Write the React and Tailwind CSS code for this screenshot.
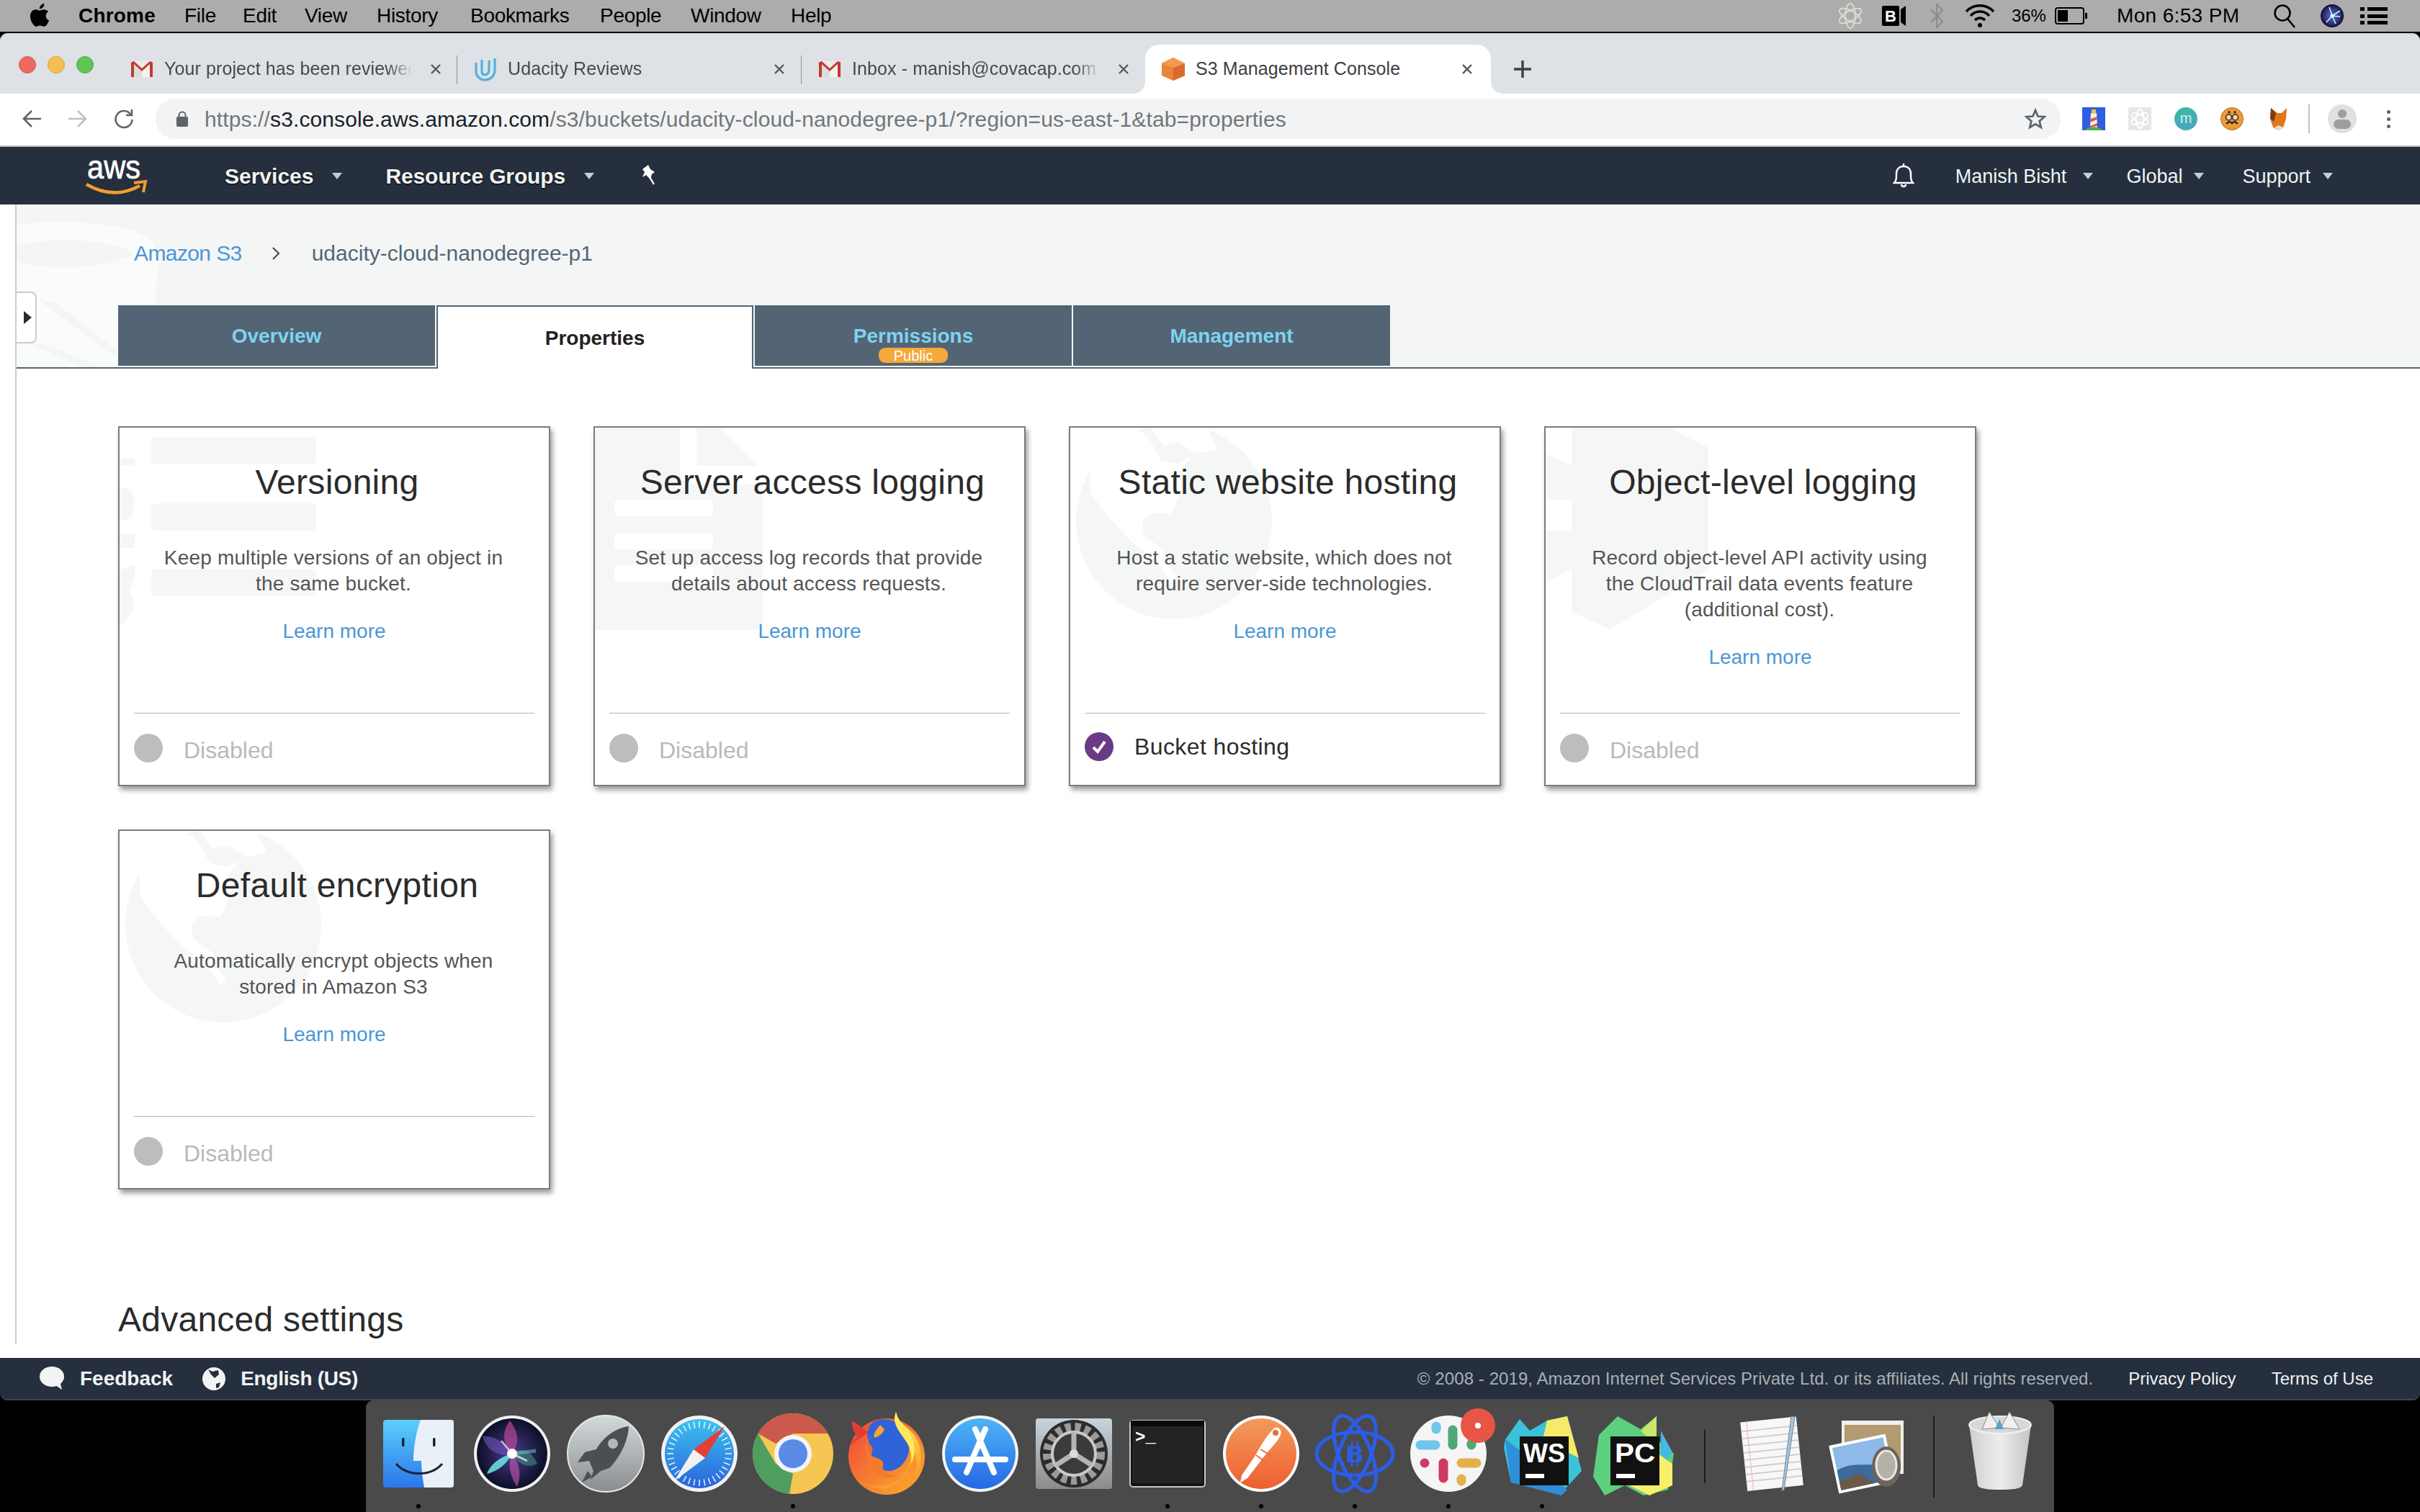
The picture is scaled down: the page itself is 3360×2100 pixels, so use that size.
import React from "react";

const FONT = "[font-family:'Liberation_Sans',Arial,sans-serif]";

function Caret({ className = "" }) {
  return (
    <svg width="14" height="9" viewBox="0 0 14 9" className={className}>
      <path d="M0 0H14L7 9Z" fill="#c9cdd1" />
    </svg>
  );
}

function CloseX() {
  return (
    <svg width="16" height="16" viewBox="0 0 16 16" className="shrink-0">
      <path d="M2 2L14 14M14 2L2 14" stroke="#55595e" strokeWidth="2.4" />
    </svg>
  );
}

function Gmail() {
  return (
    <svg width="30" height="22" viewBox="0 0 30 22" className="shrink-0">
      <path d="M0 0H30V22H0Z" fill="#ececec" />
      <path d="M4 4L15 14V22H4Z" fill="#dcdcdc" />
      <path d="M15 14L26 4V22H15Z" fill="#f2f2f2" />
      <path d="M4 4V22H0V1.5L4 0L15 10L26 0L30 1.5V22H26V4L15 14Z" fill="#c5392c" />
    </svg>
  );
}

function UdacityIcon() {
  return (
    <svg width="32" height="34" viewBox="0 0 32 34" className="shrink-0" fill="none" stroke="#4fb3dc" strokeWidth="3.2">
      <path d="M3 8V21C3 27 9 32 15 32C23 32 29 26 29 18V2" />
      <path d="M11 4V20C11 24 13 25 15 25C20 25 21 21 21 16V5" />
    </svg>
  );
}

function S3Icon() {
  return (
    <svg width="32" height="32" viewBox="0 0 32 32" className="shrink-0">
      <path d="M16 0L32 8V25L16 32L0 25V8Z" fill="#e8843a" />
      <path d="M16 14L32 8V25L16 32Z" fill="#d96a2f" />
      <path d="M16 0L32 8L16 14L0 8Z" fill="#ef9a4e" />
    </svg>
  );
}

function ChromeTab({ icon, label, active, sep, widthClass = "w-[477px]" }) {
  return (
    <div className={`relative flex h-[68px] items-center ${widthClass} shrink-0 ${active ? "bg-white rounded-t-[20px]" : ""}`}>
      {active && <div className="absolute bottom-0 -left-[16px] h-[16px] w-[16px] bg-[radial-gradient(circle_at_0_0,transparent_15.5px,white_16px)]" />}
      {active && <div className="absolute bottom-0 -right-[16px] h-[16px] w-[16px] bg-[radial-gradient(circle_at_100%_0,transparent_15.5px,white_16px)]" />}
      <div className="flex w-[70px] shrink-0 justify-center pl-[8px]">{icon}</div>
      <div className={`w-[352px] overflow-hidden whitespace-nowrap text-[25px] tracking-[0.1px] ${active ? "text-[#3c4043]" : "text-[#45494e] [mask-image:linear-gradient(to_right,black_88%,transparent_98%)]"}`}>
        {label}
      </div>
      <div className="ml-[17px]"><CloseX /></div>
      {sep && <div className="absolute right-0 top-[15px] h-[40px] w-[1.5px] bg-[#8d9094]" />}
    </div>
  );
}

const menuItems = [
  ["File", "w-[81px]"],
  ["Edit", "w-[86px]"],
  ["View", "w-[100px]"],
  ["History", "w-[130px]"],
  ["Bookmarks", "w-[180px]"],
  ["People", "w-[126px]"],
  ["Window", "w-[139px]"],
  ["Help", "w-[70px]"],
];

function MenuBar() {
  return (
    <div className="flex h-[44px] shrink-0 items-center bg-[#acacac] text-[28px] text-black">
      <svg width="28" height="32" viewBox="0 0 814 1000" className="ml-[41px] mb-[2px]">
        <path d="M788 340c-6 4-108 62-108 190 0 148 130 200 134 202-1 3-21 72-69 142-43 61-88 122-156 122s-86-40-165-40c-77 0-104 41-166 41s-106-57-156-127C44 788 0 664 0 547c0-189 123-289 244-289 64 0 118 42 158 42 38 0 98-45 171-45 28 0 128 3 215 85zM554 160c31-37 53-87 53-138 0-7-1-14-2-20-51 2-111 34-147 76-28 32-55 82-55 134 0 8 1 16 2 18 3 1 9 1 14 1 46 0 103-31 135-71z" fill="#000" />
      </svg>
      <div className="ml-[40px] w-[147px] font-bold leading-none tracking-[0.2px]">Chrome</div>
      {menuItems.map(([m, w]) => (
        <div key={m} className={`${w} leading-none tracking-[-0.3px]`}>{m}</div>
      ))}
      <div className="ml-auto flex items-center pr-[45px]">
        <svg width="32" height="44" viewBox="0 0 32 44" fill="none" stroke="#e4e2d8" strokeWidth="1.6">
          <ellipse cx="16" cy="22" rx="7" ry="17" />
          <ellipse cx="16" cy="22" rx="7" ry="17" transform="rotate(60 16 22)" />
          <ellipse cx="16" cy="22" rx="7" ry="17" transform="rotate(-60 16 22)" />
        </svg>
        <svg width="33" height="28" viewBox="0 0 33 28" className="ml-[28px]">
          <rect x="0" y="0" width="24" height="28" rx="2" fill="#000" />
          <path d="M26 5L33 0V28L26 23Z" fill="#000" />
          <text x="4" y="22" fontFamily="Liberation Sans" fontWeight="700" fontSize="22" fill="#fff">B</text>
        </svg>
        <svg width="18" height="36" viewBox="0 0 18 36" className="ml-[34px]" fill="none" stroke="#8c8c8c" strokeWidth="2">
          <path d="M1 9L17 26L9 34V2L17 10L1 27" />
        </svg>
        <svg width="42" height="34" viewBox="0 0 42 34" className="ml-[30px]" fill="none" stroke="#000" strokeWidth="3.4">
          <path d="M2 11C12 0 30 0 40 11" />
          <path d="M8 17C15 9 27 9 34 17" />
          <path d="M14 23C18 19 24 19 28 23" />
          <circle cx="21" cy="30" r="3" fill="#000" stroke="none" />
        </svg>
        <div className="ml-[23px] w-[50px] text-[24px] leading-none tracking-[-0.1px]">36%</div>
        <svg width="46" height="24" viewBox="0 0 46 24" className="ml-[10px]">
          <rect x="1" y="1" width="39" height="22" rx="3" fill="none" stroke="#000" strokeWidth="2" />
          <rect x="4" y="4" width="14" height="16" fill="#000" />
          <rect x="42" y="8" width="3" height="8" fill="#000" />
        </svg>
        <div className="ml-[40px] w-[174px] leading-none tracking-[0.35px] whitespace-nowrap">Mon 6:53 PM</div>
        <svg width="32" height="34" viewBox="0 0 32 34" className="ml-[43px]" fill="none" stroke="#000" strokeWidth="2.6">
          <circle cx="13" cy="13" r="10.5" />
          <path d="M20 21L30 33" />
        </svg>
        <svg width="32" height="44" viewBox="0 0 32 44" className="ml-[34px]">
          <defs>
            <radialGradient id="ms">
              <stop offset="0" stopColor="#3a7fd0" />
              <stop offset="0.7" stopColor="#3a2a78" />
              <stop offset="1" stopColor="#0d0d24" />
            </radialGradient>
          </defs>
          <circle cx="16" cy="22" r="16" fill="url(#ms)" />
          <path d="M16 22L27 15M16 22L8 31M16 22L21 33M16 22L12 10M16 22L27 23" stroke="#bff" strokeWidth="1.6" />
          <circle cx="16" cy="22" r="2.5" fill="#fff" />
        </svg>
        <svg width="38" height="24" viewBox="0 0 38 24" className="ml-[23px]">
          <rect x="0" y="0" width="6" height="5" fill="#000" />
          <rect x="10" y="0" width="28" height="5" fill="#000" />
          <rect x="0" y="10" width="6" height="5" fill="#000" />
          <rect x="10" y="10" width="28" height="5" fill="#000" />
          <rect x="0" y="19" width="6" height="5" fill="#000" />
          <rect x="10" y="19" width="28" height="5" fill="#000" />
        </svg>
      </div>
    </div>
  );
}

function TabStrip() {
  return (
    <div className="flex h-[84px] shrink-0 rounded-t-[10px] bg-[#dee1e6] border-t-2 border-[#d4d7dc]">
      <div className="flex w-[158px] shrink-0 items-start gap-[16px] pl-[26px] pt-[30px]">
        <div className="h-[24px] w-[24px] rounded-full bg-[#ed6a5e] border border-[#d5574c]" />
        <div className="h-[24px] w-[24px] rounded-full bg-[#f5bf4f] border border-[#d9a43c]" />
        <div className="h-[24px] w-[24px] rounded-full bg-[#61c554] border border-[#52a945]" />
      </div>
      <div className="mt-[14px] flex">
        <ChromeTab icon={<Gmail />} label="Your project has been reviewed - manish" sep />
        <ChromeTab icon={<UdacityIcon />} label="Udacity Reviews" sep widthClass="w-[478px]" />
        <ChromeTab icon={<Gmail />} label="Inbox - manish@covacap.com - Mail" />
        <ChromeTab icon={<S3Icon />} label="S3 Management Console" active widthClass="w-[480px]" />
        <div className="ml-[32px] flex items-center">
          <svg width="24" height="24" viewBox="0 0 24 24">
            <path d="M12 0V24M0 12H24" stroke="#3c4043" strokeWidth="3.4" />
          </svg>
        </div>
      </div>
    </div>
  );
}

function Toolbar() {
  return (
    <div className="flex h-[74px] shrink-0 items-center border-b-2 border-[#bfc1c4] bg-white pb-[2px]">
      <svg width="26" height="26" viewBox="0 0 26 26" className="ml-[31px]" fill="none" stroke="#5f6368" strokeWidth="2.6">
        <path d="M26 13H2M13 2L2 13L13 24" />
      </svg>
      <svg width="26" height="26" viewBox="0 0 26 26" className="ml-[38px]" fill="none" stroke="#bcbfc3" strokeWidth="2.6">
        <path d="M0 13H24M13 2L24 13L13 24" />
      </svg>
      <svg width="28" height="28" viewBox="0 0 28 28" className="ml-[37px]" fill="none" stroke="#5f6368" strokeWidth="2.6">
        <path d="M23.5 8A11.5 11.5 0 1 0 25.5 15" />
        <path d="M25 1V9H17" />
      </svg>
      <div className="ml-[30px] flex h-[56px] w-[2645px] items-center rounded-full bg-[#f1f3f4]">
        <svg width="16" height="22" viewBox="0 0 16 22" className="ml-[29px]">
          <rect x="0" y="8" width="16" height="14" rx="2" fill="#5f6368" />
          <path d="M3.5 9V6A4.5 4.5 0 0 1 12.5 6V9" fill="none" stroke="#5f6368" strokeWidth="2" />
        </svg>
        <div className="ml-[23px] mt-[1px] whitespace-nowrap text-[30px] leading-none tracking-[0.12px] text-[#72767a]">
          https://<span className="text-[#202124]">s3.console.aws.amazon.com</span>/s3/buckets/udacity-cloud-nanodegree-p1/?region=us-east-1&amp;tab=properties
        </div>
        <svg width="30" height="30" viewBox="0 0 24 24" className="ml-auto mr-[20px]" fill="none" stroke="#5f6368" strokeWidth="2.2">
          <path d="M12 2.5L14.8 9.2L22 9.8L16.5 14.5L18.2 21.5L12 17.8L5.8 21.5L7.5 14.5L2 9.8L9.2 9.2Z" />
        </svg>
      </div>
      <svg width="32" height="32" viewBox="0 0 32 32" className="ml-[30px]">
        <rect width="32" height="32" fill="#2f5fe0" />
        <path d="M12 8H20L21 28H11Z" fill="#f4f4f4" />
        <path d="M11.5 16L20.5 13V17L11 21Z" fill="#e8563a" />
        <path d="M11 26L21 22V26L11 28Z" fill="#e8563a" />
        <rect x="13" y="3" width="6" height="6" fill="#f6c344" />
        <path d="M4 32C6 26 26 26 28 32Z" fill="#4cae50" />
      </svg>
      <svg width="32" height="32" viewBox="0 0 32 32" className="ml-[32px]">
        <rect width="32" height="32" rx="2" fill="#e6e6e6" />
        <g fill="none" stroke="#fff" strokeWidth="1.8">
          <ellipse cx="16" cy="16" rx="5.5" ry="13" />
          <ellipse cx="16" cy="16" rx="5.5" ry="13" transform="rotate(60 16 16)" />
          <ellipse cx="16" cy="16" rx="5.5" ry="13" transform="rotate(-60 16 16)" />
        </g>
      </svg>
      <svg width="32" height="32" viewBox="0 0 32 32" className="ml-[32px]">
        <defs>
          <linearGradient id="mg" x1="0" y1="0" x2="0" y2="1">
            <stop offset="0" stopColor="#3bb8a3" />
            <stop offset="1" stopColor="#4aa5c4" />
          </linearGradient>
        </defs>
        <circle cx="16" cy="16" r="16" fill="url(#mg)" />
        <text x="16" y="22" textAnchor="middle" fontFamily="Liberation Sans" fontSize="20" fill="#d6f3ee">m</text>
      </svg>
      <svg width="32" height="32" viewBox="0 0 32 32" className="ml-[32px]">
        <circle cx="16" cy="16" r="15.5" fill="#ee9a3b" stroke="#b06b20" />
        <circle cx="11.5" cy="14" r="4" fill="#f7d9a8" stroke="#222" strokeWidth="1.5" />
        <circle cx="20.5" cy="14" r="4" fill="#f7d9a8" stroke="#222" strokeWidth="1.5" />
        <path d="M8 23C12 19 14 20 16 22C18 20 20 19 24 23" fill="none" stroke="#222" strokeWidth="2.4" />
        <path d="M10 8L12 4L14 8ZM18 8L20 4L22 8Z" fill="#222" />
      </svg>
      <svg width="32" height="32" viewBox="0 0 32 32" className="ml-[33px]">
        <path d="M5 1L14 8H20L27 1L26 16L22 28L16 32L8 28L4 16Z" fill="#e2761b" />
        <path d="M5 1L12 8L9 20L4 16Z" fill="#763e1a" />
        <path d="M10 28L16 32L22 28L16 25Z" fill="#e8dccf" />
      </svg>
      <div className="ml-[25px] h-[40px] w-[1.5px] bg-[#bdc1c6]" />
      <div className="ml-[25px] flex h-[40px] w-[40px] flex-col items-center justify-center gap-[2px] rounded-full bg-[#e0e0e0]">
        <div className="h-[12px] w-[12px] rounded-full bg-[#9e9e9e]" />
        <div className="h-[13px] w-[24px] rounded-full bg-[#9e9e9e]" />
      </div>
      <div className="ml-[42px] flex flex-col gap-[5px]">
        <div className="h-[5px] w-[5px] rounded-full bg-[#5f6368]" />
        <div className="h-[5px] w-[5px] rounded-full bg-[#5f6368]" />
        <div className="h-[5px] w-[5px] rounded-full bg-[#5f6368]" />
      </div>
    </div>
  );
}

function NavBar() {
  return (
    <div className="flex h-[80px] shrink-0 items-center bg-[#252f3e] text-[#f2f3f3]">
      <svg width="90" height="60" viewBox="0 0 90 60" className="ml-[118px] mb-[4px]">
        <text x="3" y="36" fontFamily="Liberation Sans" fontSize="46" textLength="74" lengthAdjust="spacingAndGlyphs" fill="#fff" stroke="#fff" strokeWidth="0.7">aws</text>
        <path d="M2 44Q40 66 76 46" fill="none" stroke="#f29d2c" strokeWidth="4.5" />
        <path d="M68 42L84 40L81 55" fill="none" stroke="#f29d2c" strokeWidth="4" />
      </svg>
      <div className="ml-[104px] pt-[2px] text-[30px] font-bold leading-none [text-shadow:0_1px_2px_#000]">Services</div>
      <Caret className="ml-[26px]" />
      <div className="ml-[60px] pt-[2px] text-[30px] font-bold leading-none tracking-[-0.15px] [text-shadow:0_1px_2px_#000]">Resource Groups</div>
      <Caret className="ml-[26px]" />
      <svg width="24" height="30" viewBox="0 0 24 30" className="ml-[64px]">
        <path d="M3 6L11 0L14 6L20 10L16 13L14 20L8 14L3 17L6 10Z" fill="#fff" />
        <path d="M13 17L19 27" stroke="#fff" strokeWidth="2.4" />
      </svg>
      <div className="ml-auto flex items-center pr-[121px]">
        <svg width="30" height="36" viewBox="0 0 30 36" fill="none" stroke="#fff" strokeWidth="2.4">
          <path d="M2 28C5 25 5 22 5 15C5 9 9 5 15 5C21 5 25 9 25 15C25 22 25 25 28 28Z" />
          <path d="M15 1V5M12 30C12 34 18 34 18 30" />
        </svg>
        <div className="ml-[57px] pt-[2px] text-[27px] leading-none">Manish Bisht</div>
        <Caret className="ml-[23px]" />
        <div className="ml-[46px] pt-[2px] text-[27px] leading-none">Global</div>
        <Caret className="ml-[16px]" />
        <div className="ml-[53px] pt-[2px] text-[27px] leading-none">Support</div>
        <Caret className="ml-[17px]" />
      </div>
    </div>
  );
}

function WmVersioning() {
  return (
    <svg className="absolute left-0 top-0" width="300" height="300" viewBox="0 0 300 300" fill="#f5f7f6">
      <rect x="44" y="13" width="229" height="38" rx="6" />
      <rect x="44" y="105" width="229" height="38" rx="6" />
      <rect x="44" y="196" width="229" height="38" rx="6" />
      <rect x="0" y="43" width="21" height="10" />
      <path d="M0 83H4C16 83 21 95 21 105C21 118 14 130 0 130Z" />
      <rect x="0" y="147" width="21" height="20" />
      <path d="M0 198L21 190V210L14 226C20 235 22 250 14 262L0 277Z" />
    </svg>
  );
}

function WmDoc() {
  return (
    <svg className="absolute left-0 top-0" width="300" height="300" viewBox="0 0 300 300">
      <path d="M0 0H118V60Q118 78 136 78H233V268Q233 281 220 281H0Z" fill="#f5f7f6" />
      <path d="M141 0H175L225 53H141Z" fill="#f5f7f6" />
      <rect x="27" y="100" width="137" height="23" rx="6" fill="#fff" />
      <rect x="27" y="146" width="137" height="23" rx="6" fill="#fff" />
      <rect x="27" y="191" width="137" height="23" rx="6" fill="#fff" />
    </svg>
  );
}

function WmGlobe() {
  return (
    <svg className="absolute left-0 top-0" width="300" height="300" viewBox="0 0 300 300">
      <circle cx="144" cy="130" r="136" fill="#f5f7f6" />
      <path d="M12 30L30 10L60 4L100 6L112 20L125 45L150 50L168 40L150 62L155 85L140 120L115 118L100 128L102 150L130 170L128 185L148 205L140 215L120 185L85 158L52 123L28 91L28 64Z" fill="#fff" />
      <path d="M112 0H190L205 30L175 36L150 20L130 25Z" fill="#fff" />
    </svg>
  );
}

function WmChip() {
  return (
    <svg className="absolute left-0 top-0" width="300" height="300" viewBox="0 0 300 300" fill="#f5f7f6">
      <path d="M36 0H172L226 28V198L90 280L36 256Z" />
      <path d="M0 36L36 52V100H0Z" />
      <path d="M0 143H36V196L0 216Z" />
    </svg>
  );
}

function Card({ wm, title, lines, status, active }) {
  return (
    <div className="relative flex h-[500px] w-[600px] flex-col overflow-visible border-2 border-[#7c7c7c] bg-white shadow-[3px_5px_7px_rgba(0,0,0,0.4)]">
      <div className="absolute inset-0 overflow-hidden">{wm}</div>
      <div className="relative flex h-full flex-col">
        <div className="pt-[48px] pl-[8px] text-center text-[48px] leading-[56px] tracking-[0.3px] text-[#2b2b2b]">{title}</div>
        <div className="mt-[59px] pr-[2px] text-center text-[28px] leading-[36px] tracking-[0.17px] text-[#555555]">
          {lines.map((l) => (
            <div key={l}>{l}</div>
          ))}
        </div>
        <div className="mt-[30px] text-center text-[28px] leading-[36px] text-[#4a96d6]">Learn more</div>
        <div className="mt-auto ml-[20px] mr-[20px] mb-[10px] h-[90px] border-t-[1.5px] border-[#b5b5b5] pt-[25px]">
          <div className="flex items-center">
            {active ? (
              <svg width="40" height="40" viewBox="0 0 40 40">
                <circle cx="20" cy="20" r="20" fill="#6a3a85" />
                <path d="M12 21L18 27L28 13" fill="none" stroke="#fff" strokeWidth="4" />
              </svg>
            ) : (
              <div className="h-[40px] w-[40px] rounded-full bg-[#bdbdbd]" />
            )}
            <div className={`ml-[29px] text-[32px] leading-[40px] ${active ? "mt-[1px] tracking-[0.4px] text-[#2b2b2b]" : "mt-[6px] text-[#b9b9b9]"}`}>{status}</div>
          </div>
        </div>
      </div>
    </div>
  );
}

function Content() {
  return (
    <div className="flex h-[1602px] shrink-0 bg-white">
      <div className="w-[21px] shrink-0 bg-white" />
      <div className="relative h-[1583px] flex-1 overflow-hidden border-l-2 border-[#cccccc]">
        <div className="relative h-[228px] overflow-hidden bg-[#f4f6f6]">
          <svg className="absolute left-0 top-0" width="230" height="228" viewBox="0 0 230 228">
            <path d="M0 28C60 20 165 24 190 53L197 79L185 228H0Z" fill="#fafbfb" />
            <path d="M0 57C40 46 130 46 163 68C130 90 40 92 0 80Z" fill="#f4f6f6" />
            <path d="M30 131L54 136L140 203V213L40 140Z" fill="#f4f6f6" />
            <path d="M19 193H37L117 226H90Z" fill="#f4f6f6" />
          </svg>
          <div className="relative flex h-[140px] items-start pl-[163px] pt-[52px] text-[30px] leading-[32px]">
            <span className="text-[#4a96d6] tracking-[-0.6px]">Amazon S3</span>
            <svg width="12" height="20" viewBox="0 0 12 20" className="ml-[41px] mt-[6px]" fill="none" stroke="#444" strokeWidth="2">
              <path d="M2 2L10 10L2 18" />
            </svg>
            <span className="ml-[44px] text-[#536574]">udacity-cloud-nanodegree-p1</span>
          </div>
          <div className="relative flex h-[88px] gap-[2px] border-b-2 border-[#536574] pl-[141px]">
            <div className="flex h-[84px] w-[440px] items-center justify-center bg-[#536574] pt-[2px] text-[28px] font-bold text-[#7ed2f2]">Overview</div>
            <div className="z-10 flex h-[88px] w-[440px] items-center justify-center border-2 border-b-0 border-[#536574] bg-white pt-[2px] text-[28px] font-bold text-[#222222]">Properties</div>
            <div className="flex h-[84px] w-[440px] flex-col items-center bg-[#536574] pt-[28px] text-[28px] font-bold text-[#7ed2f2]">
              <div className="leading-[30px]">Permissions</div>
              <div className="mt-[1px] flex h-[21px] w-[96px] items-center justify-center rounded-[9px] bg-[#f5a93a] text-[20px] font-normal leading-none text-white">Public</div>
            </div>
            <div className="flex h-[84px] w-[440px] items-center justify-center bg-[#536574] pt-[2px] text-[28px] font-bold text-[#7ed2f2]">Management</div>
          </div>
        </div>
        <div className="absolute -left-[2px] top-[121px] flex h-[72px] w-[30px] items-center rounded-r-[8px] border-2 border-l-0 border-[#cccccc] bg-white pl-[12px]">
          <svg width="11" height="18" viewBox="0 0 11 18">
            <path d="M0 0L11 9L0 18Z" fill="#2b2b2b" />
          </svg>
        </div>
        <div className="pl-[141px] pt-[80px]">
          <div className="grid grid-cols-[repeat(4,600px)] gap-[60px]">
            <Card wm={<WmVersioning />} title="Versioning" lines={["Keep multiple versions of an object in", "the same bucket."]} status="Disabled" />
            <Card wm={<WmDoc />} title="Server access logging" lines={["Set up access log records that provide", "details about access requests."]} status="Disabled" />
            <Card wm={<WmGlobe />} title="Static website hosting" lines={["Host a static website, which does not", "require server-side technologies."]} status="Bucket hosting" active />
            <Card wm={<WmChip />} title="Object-level logging" lines={["Record object-level API activity using", "the CloudTrail data events feature", "(additional cost)."]} status="Disabled" />
            <Card wm={<WmGlobe />} title="Default encryption" lines={["Automatically encrypt objects when", "stored in Amazon S3"]} status="Disabled" />
          </div>
          <div className="mt-[153px] text-[48px] leading-[56px] tracking-[0.25px] text-[#2b2b2b]">Advanced settings</div>
        </div>
      </div>
    </div>
  );
}

function Footer() {
  return (
    <div className="flex h-[59px] shrink-0 items-center rounded-b-[10px] border-b-2 border-[#3d4756] bg-[#252f3e] text-[#f2f3f3]">
      <svg width="36" height="34" viewBox="0 0 36 34" className="ml-[54px]">
        <ellipse cx="18" cy="14" rx="17" ry="14" fill="#f2f3f3" />
        <path d="M20 24L32 32L29 20Z" fill="#f2f3f3" />
      </svg>
      <div className="ml-[21px] pt-[1px] text-[28px] font-bold leading-none">Feedback</div>
      <svg width="32" height="34" viewBox="0 0 32 34" className="ml-[41px]">
        <circle cx="16" cy="17" r="16" fill="#f2f3f3" />
        <path d="M8 4L14 7L22 5L23 11L17 16L12 11Z" fill="#252f3e" />
        <path d="M19 24L25 22L23 29L19 30Z" fill="#252f3e" />
      </svg>
      <div className="ml-[21px] pt-[1px] text-[28px] font-bold leading-none tracking-[-0.3px]">English (US)</div>
      <div className="ml-auto flex items-center pr-[65px] pt-[1px] text-[24px] leading-none">
        <div className="text-[#a9b0b6] tracking-[0.08px]">© 2008 - 2019, Amazon Internet Services Private Ltd. or its affiliates. All rights reserved.</div>
        <div className="ml-[49px]">Privacy Policy</div>
        <div className="ml-[49px]">Terms of Use</div>
      </div>
    </div>
  );
}

/* dock icons: each drawn in a 130x120 box centred at (65,60) */
const Finder = (
  <>
    <defs>
      <linearGradient id="fb" x1="0" y1="0" x2="0" y2="1">
        <stop offset="0" stopColor="#5cd0fb" />
        <stop offset="1" stopColor="#2a76ea" />
      </linearGradient>
    </defs>
    <rect x="16" y="13" width="98" height="94" rx="4" fill="url(#fb)" />
    <path d="M68 13H110Q114 13 114 17V103Q114 107 110 107H73C70 90 69 76 69 70H58C58 50 62 30 68 13Z" fill="#eaf0f8" />
    <rect x="42" y="38" width="3.5" height="12" rx="1.5" fill="#1c2330" />
    <rect x="85" y="38" width="3.5" height="12" rx="1.5" fill="#1c2330" />
    <path d="M34 74C50 92 82 92 98 74" fill="none" stroke="#1c2330" strokeWidth="3" />
  </>
);

const Siri = (
  <>
    <defs>
      <radialGradient id="sg">
        <stop offset="0" stopColor="#4a3c8c" />
        <stop offset="0.7" stopColor="#1f1c44" />
        <stop offset="1" stopColor="#0b1028" />
      </radialGradient>
    </defs>
    <circle cx="65" cy="60" r="53" fill="#f1f1f1" />
    <circle cx="65" cy="60" r="49" fill="url(#sg)" />
    <path d="M62 14C78 36 72 50 65 60C52 46 50 30 62 14Z" fill="#b8489a" opacity="0.7" />
    <path d="M24 36C40 34 56 46 65 60C48 66 30 56 24 36Z" fill="#7a5bc6" opacity="0.55" />
    <path d="M65 60C78 50 92 56 100 74C88 80 74 76 65 60Z" fill="#3f8f78" opacity="0.6" />
    <path d="M65 60L98 56" stroke="#6ad6c0" strokeWidth="5" opacity="0.5" />
    <path d="M65 60C58 74 46 84 30 88C34 76 48 64 65 60Z" fill="#6fe8e8" opacity="0.85" />
    <path d="M65 60C76 74 78 90 72 106C62 90 58 74 65 60Z" fill="#cf58b4" opacity="0.6" />
    <circle cx="65" cy="60" r="7" fill="#fff" />
    <path d="M65 60L50 42M65 60L86 70" stroke="#fff" strokeWidth="2.5" opacity="0.7" />
  </>
);

const Launchpad = (
  <>
    <defs>
      <linearGradient id="lg" x1="0" y1="0" x2="0" y2="1">
        <stop offset="0" stopColor="#d4dadc" />
        <stop offset="1" stopColor="#8a8d8f" />
      </linearGradient>
    </defs>
    <circle cx="65" cy="60" r="53" fill="url(#lg)" stroke="#e8e8e8" strokeWidth="2" />
    <path d="M97 22C80 24 62 36 52 54L36 58L26 72L42 70L48 84L44 96L58 84L70 80C84 66 96 44 97 22Z" fill="#4b4f53" />
    <circle cx="75" cy="46" r="7" fill="#b4b8ba" />
    <path d="M40 84L32 100L46 92Z" fill="#4b4f53" />
  </>
);

const ticks = Array.from({ length: 36 }, (_, i) => i * 10);
const Safari = (
  <>
    <defs>
      <linearGradient id="sf" x1="0" y1="0" x2="0" y2="1">
        <stop offset="0" stopColor="#3cc2ee" />
        <stop offset="1" stopColor="#2a62dc" />
      </linearGradient>
    </defs>
    <circle cx="65" cy="60" r="53" fill="#f2f2f2" />
    <circle cx="65" cy="60" r="48" fill="url(#sf)" />
    {ticks.map((a) => (
      <rect key={a} x="64.2" y="15" width="1.6" height="9" fill="#dff3fc" transform={`rotate(${a} 65 60)`} />
    ))}
    <path d="M100 22L73 66L57 54Z" fill="#e23f35" />
    <path d="M30 98L57 54L73 66Z" fill="#f1f1f1" />
  </>
);

const Chrome = (
  <>
    <circle cx="65" cy="60" r="56" fill="#f5c651" />
    <path d="M16.5 32L41 46L65 32H113.5A56 56 0 0 0 16.5 32Z" fill="#cc5a4c" />
    <path d="M16.5 32L41 74L65 88L60 115.8A56 56 0 0 1 16.5 32Z" fill="#4f9d5f" />
    <circle cx="65" cy="60" r="26" fill="#f2f4f7" />
    <circle cx="65" cy="60" r="20" fill="#5a8ce6" />
  </>
);

const Firefox = (
  <>
    <defs>
      <linearGradient id="ff" x1="0" y1="0" x2="1" y2="1">
        <stop offset="0" stopColor="#f0453a" />
        <stop offset="1" stopColor="#fbb02a" />
      </linearGradient>
      <linearGradient id="fy" x1="0" y1="0" x2="0" y2="1">
        <stop offset="0" stopColor="#ffe95a" />
        <stop offset="1" stopColor="#f98c24" />
      </linearGradient>
    </defs>
    <circle cx="65" cy="64" r="53" fill="url(#ff)" />
    <path d="M17 14C16 24 20 30 24 36L12 50L40 30Z" fill="#e33d33" />
    <path d="M44 18C58 6 90 12 96 40C100 66 84 84 68 84C48 84 40 66 46 52C36 42 36 28 44 18Z" fill="#2f63d8" />
    <path d="M52 30C40 36 36 46 40 58C44 68 62 64 60 76C58 88 70 92 80 88C68 100 42 90 38 66C32 46 40 36 52 30Z" fill="#f47b2c" />
    <path d="M56 20C50 28 46 32 48 38C54 36 60 32 62 26Z" fill="#f8a32f" />
    <path d="M78 2C70 22 88 30 100 52C112 74 108 94 90 110C116 92 122 48 96 26C86 18 80 12 78 2Z" fill="url(#fy)" />
    <path d="M78 2C72 24 86 30 96 50C100 60 100 70 98 76C108 60 104 36 92 24C84 18 80 10 78 2Z" fill="#ffe95a" />
    <path d="M96 50C104 72 96 96 72 106C58 112 42 106 30 100C60 112 90 100 96 74C98 66 98 58 96 50Z" fill="#f9a12c" />
  </>
);

const AppStore = (
  <>
    <defs>
      <linearGradient id="as" x1="0" y1="0" x2="0" y2="1">
        <stop offset="0" stopColor="#4db4f7" />
        <stop offset="1" stopColor="#2668e4" />
      </linearGradient>
    </defs>
    <circle cx="65" cy="60" r="53" fill="#f4f4f4" />
    <circle cx="65" cy="60" r="49" fill="url(#as)" />
    <g stroke="#fff" strokeLinecap="round" fill="none" strokeWidth="8">
      <path d="M72 26L46 86" />
      <path d="M58 26L84 86" />
      <path d="M30 68H100" />
    </g>
  </>
);

const SysPrefs = (
  <>
    <defs>
      <linearGradient id="sp" x1="0" y1="0" x2="0" y2="1">
        <stop offset="0" stopColor="#c8d4dc" />
        <stop offset="1" stopColor="#8b8b8b" />
      </linearGradient>
    </defs>
    <rect x="12" y="11" width="106" height="98" rx="4" fill="url(#sp)" />
    <circle cx="65" cy="60" r="47" fill="#2c2c2c" />
    <circle cx="65" cy="60" r="37" fill="none" stroke="#9a9a9a" strokeWidth="12" strokeDasharray="8 5.5" />
    <circle cx="65" cy="60" r="30" fill="#3b3b3b" stroke="#c9c9c9" strokeWidth="4" />
    <path d="M65 60V30M65 60L40 76M65 60L90 76" stroke="#b5b5b5" strokeWidth="7" />
    <circle cx="65" cy="60" r="6" fill="#ddd" />
  </>
);

const Terminal = (
  <>
    <rect x="13" y="14" width="104" height="92" rx="4" fill="#111" stroke="#c7c7c7" strokeWidth="2" />
    <rect x="16" y="17" width="98" height="84" fill="#232323" />
    <rect x="14" y="14" width="102" height="8" fill="#0a0a0a" />
    <text x="20" y="44" fontFamily="Liberation Mono" fontWeight="700" fontSize="24" fill="#fff">&gt;_</text>
  </>
);

const Postman = (
  <>
    <defs>
      <linearGradient id="pm" x1="0" y1="0" x2="0" y2="1">
        <stop offset="0" stopColor="#f39a5b" />
        <stop offset="1" stopColor="#ee5f30" />
      </linearGradient>
    </defs>
    <circle cx="65" cy="60" r="53" fill="#fff" />
    <circle cx="65" cy="60" r="49" fill="url(#pm)" />
    <path d="M84 24C90 22 94 28 92 34C88 44 76 54 66 68L46 94L36 100L38 90L56 64C64 50 74 32 84 24Z" fill="#fff" />
    <path d="M58 62L72 72M64 54L78 62" stroke="#ee6a36" strokeWidth="2" />
    <circle cx="85" cy="31" r="4" fill="#ee6a36" />
  </>
);

const Electrum = (
  <>
    <g fill="none" stroke="#2a5ee8" strokeWidth="5">
      <ellipse cx="65" cy="60" rx="53" ry="30" />
      <ellipse cx="65" cy="60" rx="22" ry="56" transform="rotate(-22 65 60)" />
      <ellipse cx="65" cy="60" rx="22" ry="56" transform="rotate(22 65 60)" />
    </g>
    <text x="65" y="72" textAnchor="middle" fontFamily="Liberation Sans" fontWeight="700" fontSize="34" fill="#2a5ee8">B</text>
    <path d="M61 42V78M69 42V78" stroke="#2a5ee8" strokeWidth="2.4" />
  </>
);

const Slack = (
  <>
    <circle cx="65" cy="60" r="53" fill="#f5f5f5" />
    <g strokeLinecap="round" fill="none" strokeWidth="13">
      <path d="M47 48H26" stroke="#6ec6ea" />
      <path d="M48 22V26" stroke="#6ec6ea" />
      <path d="M71 27V48" stroke="#4fa878" />
      <path d="M97 46V48" stroke="#4fa878" />
      <path d="M83 73H104" stroke="#e3b04b" />
      <path d="M83 98V95" stroke="#e3b04b" />
      <path d="M58 73V94" stroke="#cf3a62" />
      <path d="M32 73V73" stroke="#cf3a62" />
    </g>
  </>
);

const Webstorm = (
  <>
    <path d="M14 40L34 12L48 28L72 14L100 8L120 84L96 110L92 118L58 102L22 100L12 52Z" fill="#3ac2d6" />
    <path d="M72 14L100 8L116 66L66 40Z" fill="#f6ea6a" />
    <path d="M22 100L14 40L40 60L100 110L92 118Z" fill="#2f8fd8" />
    <rect x="34" y="36" width="68" height="68" fill="#111" />
    <rect x="42" y="88" width="26" height="6" fill="#fff" />
    <text x="68" y="72" textAnchor="middle" fontFamily="Liberation Sans" fontWeight="700" fontSize="36" textLength="58" lengthAdjust="spacingAndGlyphs" fill="#fff">WS</text>
  </>
);

const Pycharm = (
  <>
    <path d="M14 34L40 8L72 26L94 8L94 40L118 60L110 110L76 118L50 104L22 118L6 92Z" fill="#5dd07f" />
    <path d="M94 8L94 50L72 28Z" fill="#c8e86a" />
    <path d="M100 28L116 58L100 80Z" fill="#45b8e8" />
    <path d="M96 60L116 74L116 104L84 118L48 100Z" fill="#f8f068" />
    <rect x="30" y="36" width="68" height="68" fill="#111" />
    <rect x="38" y="88" width="26" height="6" fill="#fff" />
    <text x="64" y="72" textAnchor="middle" fontFamily="Liberation Sans" fontWeight="700" fontSize="36" textLength="56" lengthAdjust="spacingAndGlyphs" fill="#fff">PC</text>
  </>
);

const TextEdit = (
  <>
    <g transform="rotate(-6 65 60)">
      <rect x="24" y="12" width="78" height="96" fill="#f7f7f7" />
      {[24, 34, 44, 54, 64, 74, 84, 94].map((y) => (
        <rect key={y} x="24" y={y} width="78" height="1.5" fill="#c5c5c5" />
      ))}
      <rect x="32" y="12" width="1" height="96" fill="#eeb2b2" />
    </g>
    <path d="M90 8L95 9L80 110L77 112Z" fill="#a7c4dc" stroke="#6f8797" strokeWidth="1" />
  </>
);

const Preview = (
  <>
    <rect x="30" y="14" width="86" height="74" fill="#f1efe9" />
    <rect x="34" y="20" width="78" height="64" fill="#b39a70" />
    <g transform="rotate(-12 58 72)">
      <rect x="18" y="40" width="80" height="68" fill="#fff" />
      <rect x="22" y="44" width="72" height="60" fill="#8fb9e8" />
      <path d="M22 76C48 66 70 84 94 78V104H22Z" fill="#3c6b9c" />
      <path d="M22 92L50 86L70 104H22Z" fill="#6b5a48" />
    </g>
    <ellipse cx="92" cy="78" rx="20" ry="28" fill="#6e6458" />
    <ellipse cx="92" cy="76" rx="14" ry="20" fill="#b5b0a8" stroke="#e8e8e8" strokeWidth="3" />
  </>
);

const Trash = (
  <>
    <defs>
      <linearGradient id="tr" x1="0" y1="0" x2="1" y2="0">
        <stop offset="0" stopColor="#cfcfcf" />
        <stop offset="0.5" stopColor="#ededed" />
        <stop offset="1" stopColor="#c4c4c4" />
      </linearGradient>
    </defs>
    <path d="M22 20H108L96 104Q94 110 65 110Q36 110 34 104Z" fill="url(#tr)" />
    <ellipse cx="65" cy="20" rx="43" ry="12" fill="#d8d8d8" stroke="#f2f2f2" strokeWidth="2" />
    <path d="M40 26L50 2L64 24ZM66 24L78 2L92 26Z" fill="#f0f0f0" stroke="#888" strokeWidth="1" />
    <path d="M58 26L64 12L70 26Z" fill="#5ba4c8" />
  </>
);

function DockIcon({ art, dot, badge }) {
  return (
    <div className="relative flex h-[155px] w-[130px] shrink-0 flex-col items-center pt-[14px]">
      <svg width="130" height="120" viewBox="0 0 130 120" className="overflow-visible">{art}</svg>
      {dot && <div className="mt-[10px] h-[6px] w-[6px] rounded-full bg-black" />}
      {badge && (
        <svg width="50" height="54" viewBox="0 0 50 54" className="absolute left-[81px] top-[8px]">
          <circle cx="25" cy="27" r="24" fill="#e85546" />
          <circle cx="25" cy="27" r="4" fill="#fff" />
        </svg>
      )}
    </div>
  );
}

function Dock() {
  return (
    <div className="ml-[508px] flex h-[155px] w-[2344px] shrink-0 rounded-t-[10px] bg-[#4a4a4b] pl-[8px]">
      <DockIcon art={Finder} dot />
      <DockIcon art={Siri} />
      <DockIcon art={Launchpad} />
      <DockIcon art={Safari} />
      <DockIcon art={Chrome} dot />
      <DockIcon art={Firefox} />
      <DockIcon art={AppStore} />
      <DockIcon art={SysPrefs} />
      <DockIcon art={Terminal} dot />
      <DockIcon art={Postman} dot />
      <DockIcon art={Electrum} dot />
      <DockIcon art={Slack} dot badge />
      <DockIcon art={Webstorm} dot />
      <DockIcon art={Pycharm} />
      <div className="ml-[30px] mr-[29px] mt-[41px] h-[74px] w-[2px] bg-[#1c1c1c]" />
      <DockIcon art={TextEdit} />
      <DockIcon art={Preview} />
      <div className="ml-[27px] mr-[26px] mt-[21px] h-[114px] w-[2px] bg-[#1c1c1c]" />
      <DockIcon art={Trash} />
    </div>
  );
}

export default function App() {
  return (
    <div className={`flex h-[2100px] w-[3360px] flex-col overflow-hidden bg-black ${FONT}`}>
      <MenuBar />
      <div className="h-[2px] shrink-0 bg-black" />
      <div className="flex h-[1899px] shrink-0 flex-col">
        <TabStrip />
        <Toolbar />
        <NavBar />
        <Content />
        <Footer />
      </div>
      <Dock />
    </div>
  );
}
